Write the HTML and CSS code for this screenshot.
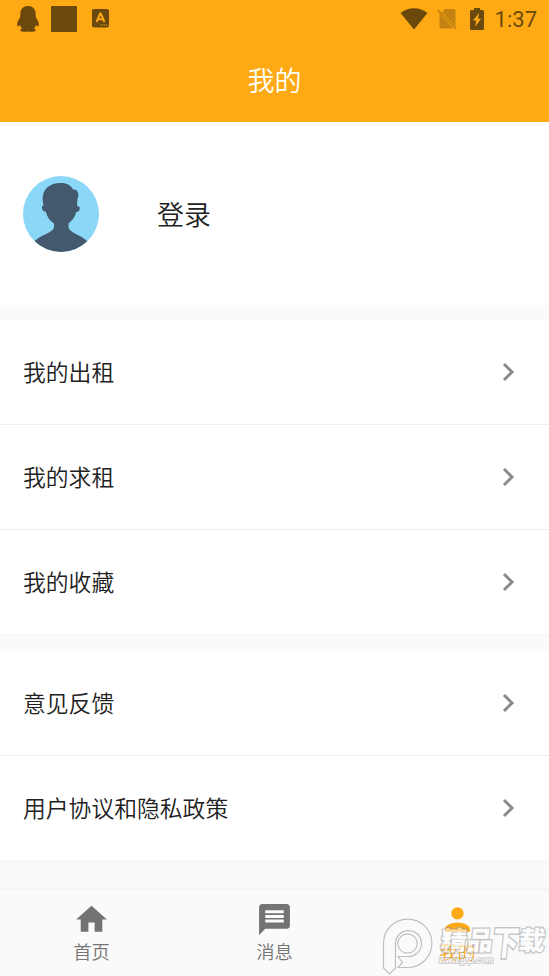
FILE: index.html
```html
<!DOCTYPE html>
<html lang="zh-CN">
<head>
<meta charset="utf-8">
<title>我的</title>
<link rel="stylesheet" href="styles.css">
</head>
<body>
<div class="app">
  <header class="header">
    <div class="status">
      <div class="status-left">
        <svg class="penguin" width="22" height="26" viewBox="0 0 22 26"><path d="M11 0C6 0 3.300 3.500 3.300 8v3C1.500 13.500.2 16 .2 18.500c0 2 .8 2.500 2.600.5.4 1.300 1 2.300 2.300 3.300-1.300.5-1.800 1.200-1.800 2C3.300 26 9 26 11 25.500c2 .5 7.700.5 7.700-1.200 0-.8-.5-1.500-1.800-2 1.300-1 1.900-2 2.300-3.300 1.800 2 2.600 1.500 2.600-.5 0-2.500-1.300-5-3.100-7.500V8C18.700 3.500 16 0 11 0z"/></svg>
        <span class="square"></span>
        <svg class="abox" width="17" height="19" viewBox="0 0 17 19"><rect width="17" height="18.500" rx="2"/><path d="M4.500 13 8.200 4.500h.6L12.500 13M6 10.200h5" fill="none" stroke="#ffaa14" stroke-width="1.900"/><path d="M9 16h1.300M11.500 16h1.300M14 16h1.300" stroke="#ffaa14" stroke-width="1"/></svg>
      </div>
      <div class="status-right">
        <svg class="wifi" width="28" height="22" viewBox="0 0 28 22"><path d="M.5 5C8-1.500 20-1.500 27.500 5L14 21.500z"/></svg>
        <svg class="nosim" width="20" height="22" viewBox="0 0 20 22"><path d="M8 1h8.500q2 0 2 2v15L5 4zM2.500 5.500 16.500 20.500h-12q-2 0-2-2z"/><path d="M.7 2 19 20.500" fill="none" stroke="#6b490c" stroke-width="1.800"/></svg>
        <svg class="battery" width="14" height="22" viewBox="0 0 14 22"><path d="M4 0h6v2h2.500Q14 2 14 3.500v17q0 1.500-1.500 1.500h-11Q0 22 0 20.500v-17Q0 2 1.500 2H4z"/><path d="M9 5 3 12.500h3.200L5.300 19 11 10.800H8z" fill="#ffaa14"/></svg>
        <span class="clock">1:37</span>
      </div>
    </div>
    <h1 class="title">我的</h1>
  </header>
  <main class="content">
    <section class="profile">
      <svg class="avatar" width="76" height="76" viewBox="0 0 76 76"><defs><clipPath id="c"><circle cx="38" cy="38" r="38"/></clipPath></defs><g clip-path="url(#c)"><path fill="#8bd7f7" d="M0 0h76v76H0z"/><path fill="#435a6e" d="M20.500 29.500C17 16 24 7 38 7c6 0 10 2.500 12 6.500 5-1 6.500 5 4.500 9l-.5 7.500c4-.5 3.500 6-.7 6C52 41 49 45 45.500 47.500v3c0 7 15 8 21.500 18V80H9V68.500c6-10 22-11 22-18v-3C27 45 24 41 22.700 35.500c-4.200.5-4.700-6.500-2.200-6z"/></g></svg>
      <span class="login">登录</span>
    </section>
    <section class="group">
      <div class="row"><span>我的出租</span><svg class="chev" width="13" height="20" viewBox="0 0 13 20"><path d="M2 2l8 8-8 8"/></svg></div>
      <div class="row"><span>我的求租</span><svg class="chev" width="13" height="20" viewBox="0 0 13 20"><path d="M2 2l8 8-8 8"/></svg></div>
      <div class="row"><span>我的收藏</span><svg class="chev" width="13" height="20" viewBox="0 0 13 20"><path d="M2 2l8 8-8 8"/></svg></div>
    </section>
    <section class="group">
      <div class="row"><span>意见反馈</span><svg class="chev" width="13" height="20" viewBox="0 0 13 20"><path d="M2 2l8 8-8 8"/></svg></div>
      <div class="row"><span>用户协议和隐私政策</span><svg class="chev" width="13" height="20" viewBox="0 0 13 20"><path d="M2 2l8 8-8 8"/></svg></div>
    </section>
  </main>
  <nav class="nav">
    <div class="tab"><svg width="37" height="37" viewBox="0 0 24 24"><path d="M10 20v-6h4v6h5v-8h3L12 3 2 12h3v8z"/></svg><span>首页</span></div>
    <div class="tab"><svg width="37" height="37" viewBox="0 0 24 24"><path d="M20 2H4c-1.100 0-2 .9-2 2v18l4-4h14c1.100 0 2-.9 2-2V4c0-1.100-.9-2-2-2zm-2 12H6v-2h12v2zm0-3H6V9h12v2zm0-3H6V6h12v2z"/></svg><span>消息</span></div>
    <div class="tab active"><svg width="37" height="37" viewBox="0 0 24 24"><path d="M12 12c2.210 0 4-1.790 4-4s-1.790-4-4-4-4 1.790-4 4 1.790 4 4 4zm0 2c-2.670 0-8 1.340-8 4v2h16v-2c0-2.660-5.330-4-8-4z"/></svg><span>我的</span></div>
  </nav>
  <div class="watermark">
    <svg width="52" height="58" viewBox="0 0 52 58"><path d="M1.500 50V25.500A24.200 24.200 0 1 1 25.500 49.500H16L20.500 44.500 16 38.500H25.500A13 13 0 1 0 13.500 26V50L7.500 56z"/><circle cx="25.500" cy="25.500" r="9.700"/></svg>
    <div class="mark-text"><span class="mark-name">精品<span class="mark-big">下</span>载</span><span class="mark-url">www.jpp.com</span></div>
  </div>
</div>
</body>
</html>
```
FILE: styles.css
```css
* { box-sizing: border-box; }
body { margin: 0; font-family: Roboto, "Noto Sans CJK SC", sans-serif; font-weight: 350; color: #212121; }
.app { position: relative; display: flex; flex-direction: column; width: 549px; height: 976px; background: #fafafa; overflow: hidden; }
.header { height: 122px; background: #ffaa14; }
.status { display: flex; justify-content: space-between; height: 37px; padding: 0 12px 0 17px; fill: #6b490c; color: #6b490c; }
.status-left, .status-right { display: flex; align-items: center; }
.square { width: 26px; height: 26px; margin: 0 15px 0 12px; border-radius: 1px; background: #6b490c; }
.nosim { margin: 0 13px 0 9px; opacity: .4; }
.clock { margin-left: 11px; padding-top: 2px; font-size: 22px; font-weight: 450; line-height: 36px; }
.title { margin: 25px 0 0; text-align: center; color: #fff; font-size: 27px; font-weight: 350; line-height: 40px; }
.content { flex: 1; }
.profile { display: flex; align-items: center; height: 183px; padding-left: 23px; background: #fff; }
.login { margin-left: 58px; padding-top: 4px; font-size: 27px; line-height: 40px; }
.group { margin-top: 15px; background: #fff; }
.group + .group { margin-top: 16px; }
.row { display: flex; align-items: center; justify-content: space-between; height: 105px; padding: 0 34px 0 23px; border-bottom: 1px solid #eee; font-size: 22.8px; }
.row:last-child { border-bottom-color: #f5f5f5; }
.row span { padding-bottom: 1px; }
.chev { fill: none; stroke: #8a8a8a; stroke-width: 3; }
.nav { display: flex; height: 86px; padding-top: 11px; box-shadow: 0 -1px 3px rgba(0,0,0,.06); background: #fafafa; }
.tab { flex: 1; display: flex; flex-direction: column; align-items: center; color: #757575; fill: #737373; font-size: 18.3px; line-height: 30px; }
.tab.active { color: #ffaa14; fill: #ffaa14; }
.watermark { position: absolute; left: 382px; top: 918px; display: flex; }
.watermark svg { fill: none; stroke: #c0c0c0; stroke-width: 1.2; }
.mark-text { display: flex; flex-direction: column; margin: 8px 0 0 7px; color: #fff; opacity: .55; }
.mark-name { font-size: 26px; font-weight: 900; line-height: 30px; transform: skewX(-6deg); -webkit-text-stroke: 2.4px #999; paint-order: stroke fill; }
.mark-big { display: inline-block; transform-origin: 50% 20%; transform: scaleY(1.3); }
.mark-url { margin-left: -2px; font-family: "Liberation Sans", sans-serif; font-size: 8.5px; font-style: italic; font-weight: 700; line-height: 9px; -webkit-text-stroke: 1.6px #999; paint-order: stroke fill; }
```
